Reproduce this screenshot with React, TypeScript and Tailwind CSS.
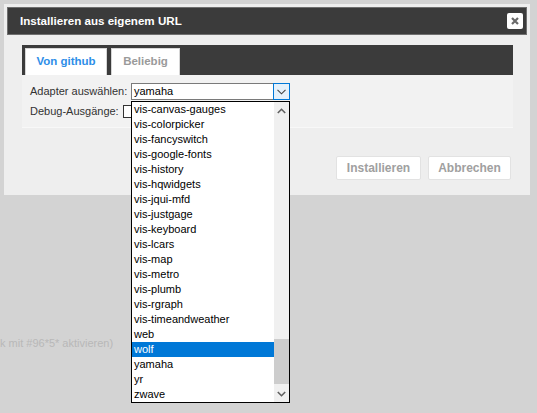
import React from "react";

const items = [
  "vis-canvas-gauges",
  "vis-colorpicker",
  "vis-fancyswitch",
  "vis-google-fonts",
  "vis-history",
  "vis-hqwidgets",
  "vis-jqui-mfd",
  "vis-justgage",
  "vis-keyboard",
  "vis-lcars",
  "vis-map",
  "vis-metro",
  "vis-plumb",
  "vis-rgraph",
  "vis-timeandweather",
  "web",
  "wolf",
  "yamaha",
  "yr",
  "zwave",
];

function ChevronDown({ className }: { className?: string }) {
  return (
    <svg width="9" height="6" viewBox="0 0 9 6" className={className}>
      <path d="M0.5 0.8 L4.5 4.8 L8.5 0.8" fill="none" stroke="#444" strokeWidth="1.1" />
    </svg>
  );
}

export default function App() {
  return (
    <div className="relative w-[537px] h-[413px] overflow-hidden bg-[#d3d3d3] font-['Liberation_Sans',Arial,sans-serif]">
      {/* page content behind the overlay */}
      <div className="absolute left-[0px] top-[336px] text-[11px] leading-[14px] text-[#b8b8b8] whitespace-nowrap">
        k mit #96*5* aktivieren)
      </div>

      {/* dialog */}
      <div className="ml-[4px] mt-[4px] w-[526px] h-[191px] bg-[#eeeeee] p-[3px] flex flex-col">
        <div className="h-[28px] bg-[#3b3b3b] border border-[#6f6f6f] flex items-center justify-between pl-[12px] pr-[3px]">
          <span className="text-white font-bold text-[11.6px] leading-none">Installieren aus eigenem URL</span>
          <div className="w-[16px] h-[16px] bg-white rounded-[2px] flex items-center justify-center">
            <svg width="8" height="8" viewBox="0 0 8 8">
              <path d="M1 1 L7 7 M7 1 L1 7" stroke="#6a6a6a" strokeWidth="2.2" />
            </svg>
          </div>
        </div>

        <div className="ml-[15px] mt-[10px] w-[491px]">
          <div className="h-[30px] bg-[#3b3b3b] flex items-end pl-[3px] gap-[4px]">
            <div className="w-[82px] h-[27px] bg-white border border-b-0 border-[#d6d6d6] flex items-center justify-center text-[11.5px] font-bold text-[#2d8ee8]">
              Von github
            </div>
            <div className="w-[69px] h-[27px] bg-white border border-b-0 border-[#d6d6d6] flex items-center justify-center text-[11.5px] font-bold text-[#9a9a9a]">
              Beliebig
            </div>
          </div>
          <div className="h-[53px] bg-[#f2f2f2] border-b border-[#f8f8f8] pl-[8px] pt-[8px] text-[11px] text-[#333]">
            <div className="flex items-center h-[17px]">
              <span className="w-[101px] whitespace-nowrap">Adapter auswählen:</span>
              <div className="w-[159px] h-[17px] bg-white border border-[#7a7a7a] flex items-stretch">
                <span className="flex-1 pl-[2px] text-[11px] text-black leading-[15px]">yamaha</span>
                <div className="w-[17px] -my-px -mr-px bg-[#e5f1fb] border border-[#0078d7] flex items-center justify-center">
                  <ChevronDown />
                </div>
              </div>
            </div>
            <div className="flex items-center mt-[5px] h-[13px]">
              <span className="w-[93px] whitespace-nowrap">Debug-Ausgänge:</span>
              <div className="w-[13px] h-[13px] bg-white border border-[#333]" />
            </div>
          </div>
        </div>

        <div className="flex justify-end gap-[7px] mt-[28px] mr-[16px]">
          <div className="w-[85px] h-[24px] bg-white border border-[#e2e2e2] rounded-[2px] flex items-center justify-center text-[12px] font-bold text-[#a0a0a0]">
            Installieren
          </div>
          <div className="w-[83px] h-[24px] bg-white border border-[#e2e2e2] rounded-[2px] flex items-center justify-center text-[12px] font-bold text-[#a0a0a0]">
            Abbrechen
          </div>
        </div>
      </div>

      {/* open dropdown list */}
      <div className="absolute left-[131px] top-[101px] w-[159px] h-[302px] bg-white border border-black flex">
        <div className="flex-1 flex flex-col">
          {items.map((it) => (
            <div
              key={it}
              className={
                it === "wolf"
                  ? "h-[15px] leading-[15px] pl-[2px] text-[11px] bg-[#0078d7] text-white"
                  : "h-[15px] leading-[15px] pl-[2px] text-[11px] text-black"
              }
            >
              {it}
            </div>
          ))}
        </div>
        <div className="w-[15px] bg-[#f0f0f0] flex flex-col">
          <div className="h-[17px] flex items-center justify-center">
            <svg width="9" height="6" viewBox="0 0 9 6">
              <path d="M0.8 5 L4.5 1.3 L8.2 5" fill="none" stroke="#606060" strokeWidth="1.6" />
            </svg>
          </div>
          <div className="flex-1 flex flex-col justify-end">
            <div className="h-[45px] bg-[#cdcdcd] mb-[1px]" />
          </div>
          <div className="h-[17px] flex items-center justify-center">
            <svg width="9" height="6" viewBox="0 0 9 6">
              <path d="M0.8 1 L4.5 4.7 L8.2 1" fill="none" stroke="#606060" strokeWidth="1.6" />
            </svg>
          </div>
        </div>
      </div>
    </div>
  );
}
